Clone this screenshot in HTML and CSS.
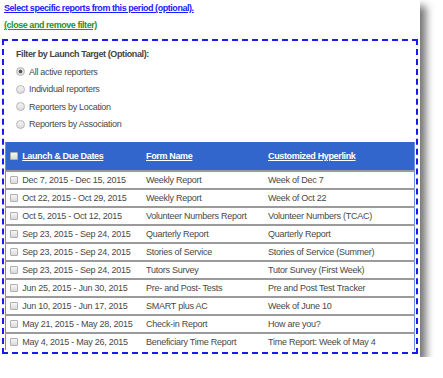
FILE: index.html
```html
<!DOCTYPE html>
<html lang="en">
<head>
    <meta charset="UTF-8">
    <title>Report Filter</title>
    <link rel="stylesheet" href="styles.css">
</head>
<body>

<div class="page">
    <a href="#" class="link-select">Select specific reports from this period (optional).</a>
    <a href="#" class="link-close">(close and remove filter)</a>

    <div class="filter-box">
        <div class="filter-title">Filter by Launch Target (Optional):</div>
        <label class="radio-row"><input type="radio" name="target" checked> All active reporters</label>
        <label class="radio-row"><input type="radio" name="target"> Individual reporters</label>
        <label class="radio-row"><input type="radio" name="target"> Reporters by Location</label>
        <label class="radio-row"><input type="radio" name="target"> Reporters by Association</label>

        <table class="reports">
            <thead>
                <tr>
                    <th class="col-date"><input type="checkbox"> <a href="#">Launch &amp; Due Dates</a></th>
                    <th class="col-form"><a href="#">Form Name</a></th>
                    <th class="col-link"><a href="#">Customized Hyperlink</a></th>
                </tr>
            </thead>
            <tbody>
                <tr><td><input type="checkbox"> Dec 7, 2015 - Dec 15, 2015</td><td>Weekly Report</td><td>Week of Dec 7</td></tr>
                <tr><td><input type="checkbox"> Oct 22, 2015 - Oct 29, 2015</td><td>Weekly Report</td><td>Week of Oct 22</td></tr>
                <tr><td><input type="checkbox"> Oct 5, 2015 - Oct 12, 2015</td><td>Volunteer Numbers Report</td><td>Volunteer Numbers (TCAC)</td></tr>
                <tr><td><input type="checkbox"> Sep 23, 2015 - Sep 24, 2015</td><td>Quarterly Report</td><td>Quarterly Report</td></tr>
                <tr><td><input type="checkbox"> Sep 23, 2015 - Sep 24, 2015</td><td>Stories of Service</td><td>Stories of Service (Summer)</td></tr>
                <tr><td><input type="checkbox"> Sep 23, 2015 - Sep 24, 2015</td><td>Tutors Survey</td><td>Tutor Survey (First Week)</td></tr>
                <tr><td><input type="checkbox"> Jun 25, 2015 - Jun 30, 2015</td><td>Pre- and Post- Tests</td><td>Pre and Post Test Tracker</td></tr>
                <tr><td><input type="checkbox"> Jun 10, 2015 - Jun 17, 2015</td><td>SMART plus AC</td><td>Week of June 10</td></tr>
                <tr><td><input type="checkbox"> May 21, 2015 - May 28, 2015</td><td>Check-in Report</td><td>How are you?</td></tr>
                <tr><td><input type="checkbox"> May 4, 2015 - May 26, 2015</td><td>Beneficiary Time Report</td><td>Time Report: Week of May 4</td></tr>
            </tbody>
        </table>
    </div>
</div>

</body>
</html>
```

FILE: styles.css
```css
body {
    margin: 0;
    background: #fff;
    font-family: "Liberation Sans", Arial, sans-serif;
    font-size: 9px;
    color: #484848;
}
.page {
    width: 420px;
    height: 357px;
    background: #fff;
    box-shadow: 6px 6px 8px rgba(0,0,0,0.55);
    padding-top: 3px;
    box-sizing: border-box;
}
.link-select,
.link-close {
    display: block;
    margin-left: 4px;
    font-weight: bold;
    font-size: 9px;
    letter-spacing: -0.45px;
    text-decoration: underline;
}
.link-select {
    color: #1a1aff;
    height: 17px;
}
.link-close {
    color: #2a8f2a;
    height: 19px;
}
.filter-box {
    margin-left: 2px;
    width: 416px;
    box-sizing: border-box;
    border: 2px dashed #1a1aee;
    padding: 5px 1px 2px 1px;
}
.filter-title {
    font-weight: bold;
    color: #444;
    margin-left: 11px;
    height: 17px;
    line-height: 17px;
    letter-spacing: -0.4px;
}
.radio-row {
    display: flex;
    align-items: center;
    height: 17.5px;
    margin-left: 11px;
    gap: 4px;
    letter-spacing: -0.3px;
}
.radio-row input {
    appearance: none;
    margin: 0;
    width: 9px;
    height: 9px;
    border: 1px solid #b5b5b5;
    border-radius: 50%;
    background: linear-gradient(#f4f4f4, #dcdcdc);
    box-sizing: border-box;
}
.radio-row input:checked {
    background: radial-gradient(circle, #555 0, #555 1.6px, #e0e0e0 2.2px);
}
.reports {
    margin-top: 9px;
    width: 410px;
    border-collapse: collapse;
    border-left: 1px solid #6a8ee0;
    border-right: 1px solid #6a8ee0;
    letter-spacing: -0.25px;
}
.reports th {
    background: #3366cc;
    height: 28px;
    padding: 0;
    text-align: left;
    font-weight: bold;
    letter-spacing: -0.35px;
    border-bottom: 2px solid #9a9a9a;
}
.reports th a {
    color: #fff;
    text-decoration: underline;
}
.reports td {
    height: 16px;
    padding: 0;
    border-bottom: 2px solid #9a9a9a;
    white-space: nowrap;
}
.reports tbody tr:last-child td {
    border-bottom: none;
}
.col-date {
    width: 136px;
    padding-left: 4px !important;
}
.col-form {
    width: 122px;
}
.reports td:first-child {
    padding-left: 4px;
}
.reports input[type="checkbox"] {
    appearance: none;
    margin: 0 2px 0 0;
    width: 8px;
    height: 8px;
    border: 1px solid #b0b0b0;
    border-radius: 1px;
    background: linear-gradient(#f6f6f6, #dadada);
    vertical-align: -1px;
    box-sizing: border-box;
}
```
